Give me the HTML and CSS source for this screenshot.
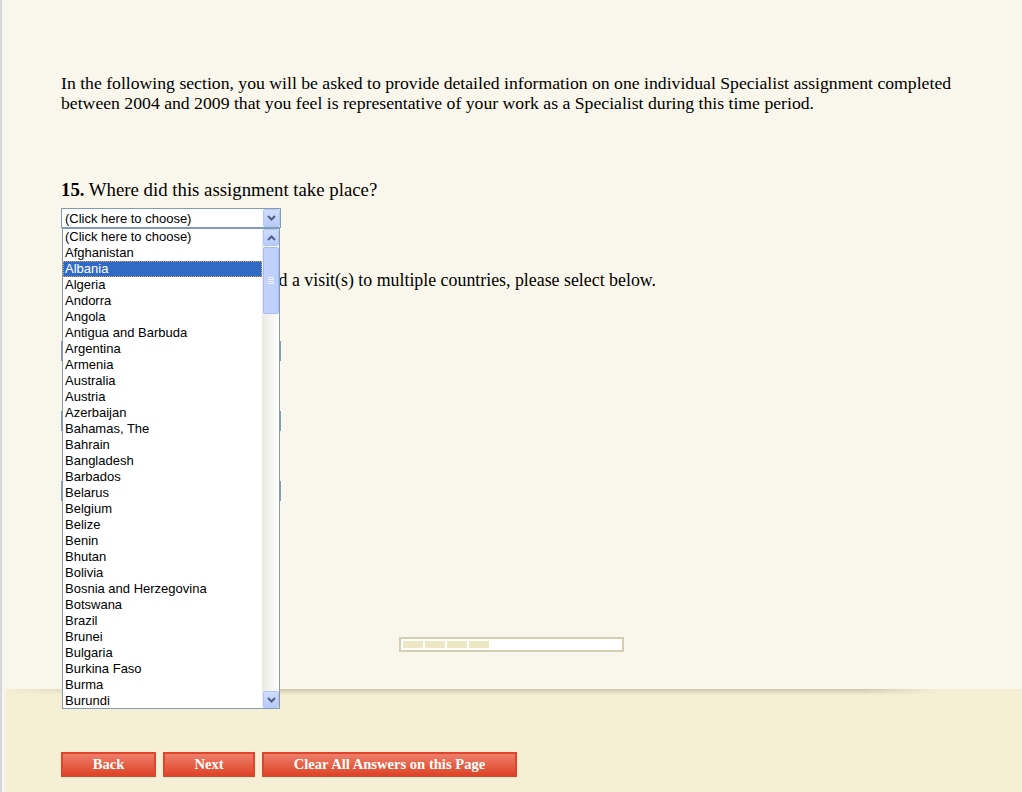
FILE: index.html
```html
<!DOCTYPE html>
<html lang="en">
<head>
    <meta charset="UTF-8">
    <title>Specialist Survey</title>
    <link rel="stylesheet" href="styles.css">
</head>
<body>
    <div class="page">
        <!-- Survey Section -->
        <div class="main">
            <p class="intro">In the following section, you will be asked to provide detailed information on one individual Specialist assignment completed between 2004 and 2009 that you feel is representative of your work as a Specialist during this time period.</p>

            <div class="question q15">
                <p class="q-title"><b>15.</b> Where did this assignment take place?</p>
                <div class="dropdown">
                    <div class="select">
                        <span class="select-text">(Click here to choose)</span>
                        <span class="arrow-btn">
                            <svg width="9" height="6" viewBox="0 0 9 6"><polyline points="1,1 4.5,4.5 8,1" fill="none" stroke="#4d6185" stroke-width="2"/></svg>
                        </span>
                    </div>

                    <!-- Open option list -->
                    <div class="listbox">
                        <ul class="options">
                            <li>(Click here to choose)</li>
                            <li>Afghanistan</li>
                            <li class="selected">Albania</li>
                            <li>Algeria</li>
                            <li>Andorra</li>
                            <li>Angola</li>
                            <li>Antigua and Barbuda</li>
                            <li>Argentina</li>
                            <li>Armenia</li>
                            <li>Australia</li>
                            <li>Austria</li>
                            <li>Azerbaijan</li>
                            <li>Bahamas, The</li>
                            <li>Bahrain</li>
                            <li>Bangladesh</li>
                            <li>Barbados</li>
                            <li>Belarus</li>
                            <li>Belgium</li>
                            <li>Belize</li>
                            <li>Benin</li>
                            <li>Bhutan</li>
                            <li>Bolivia</li>
                            <li>Bosnia and Herzegovina</li>
                            <li>Botswana</li>
                            <li>Brazil</li>
                            <li>Brunei</li>
                            <li>Bulgaria</li>
                            <li>Burkina Faso</li>
                            <li>Burma</li>
                            <li>Burundi</li>
                        </ul>
                        <div class="scrollbar">
                            <div class="sb-btn">
                                <svg width="9" height="6" viewBox="0 0 9 6"><polyline points="1,5 4.5,1.5 8,5" fill="none" stroke="#4d6185" stroke-width="2"/></svg>
                            </div>
                            <div class="sb-track">
                                <div class="sb-thumb">
                                    <span class="grip"></span>
                                </div>
                            </div>
                            <div class="sb-btn">
                                <svg width="9" height="6" viewBox="0 0 9 6"><polyline points="1,1 4.5,4.5 8,1" fill="none" stroke="#4d6185" stroke-width="2"/></svg>
                            </div>
                        </div>
                    </div>
                </div>
            </div>

            <div class="question q16">
                <p class="q-title"><b>16.</b> If your assignment included a visit(s) to multiple countries, please select below.</p>
                <div class="select"></div>
                <div class="select"></div>
                <div class="select"></div>
            </div>

            <!-- Progress -->
            <div class="progress">
                <span class="seg"></span>
                <span class="seg"></span>
                <span class="seg"></span>
                <span class="seg"></span>
            </div>
        </div>

        <!-- Navigation -->
        <div class="footer">
            <div class="shadow"></div>
            <div class="buttons">
                <button class="nav-btn back">Back</button>
                <button class="nav-btn next">Next</button>
                <button class="nav-btn clear">Clear All Answers on this Page</button>
            </div>
        </div>
    </div>
</body>
</html>
```

FILE: styles.css
```css
/* General Styles */
body {
    margin: 0;
    font-family: "Liberation Serif", "Times New Roman", serif;
    font-size: 16px;
    color: #000;
    background-color: #f4f4f2;
    border-left: 2px solid #d6d6d6;
    padding-left: 3px;
}

.page {
    min-height: 792px;
    background-color: #f9f7eb;
}

/* Survey area */
.main {
    box-sizing: border-box;
    height: 689px;
    padding: 73px 60px 0 56px;
    background-color: #f9f7eb;
}

.intro {
    margin: 0;
    font-size: 17.7px;
    line-height: 20px;
}

.question {
    margin-top: 67px;
}

.q-title {
    margin: 0;
    line-height: 20px;
}

.q15 .q-title {
    font-size: 18.8px;
}

/* Fake select boxes */
.dropdown {
    position: relative;
    margin-top: 8px;
    width: 220px;
}

.select {
    box-sizing: border-box;
    width: 220px;
    height: 20px;
    border: 1px solid #7f9db9;
    background-color: #fff;
    font-family: "Liberation Sans", Arial, sans-serif;
    font-size: 13px;
    display: flex;
    align-items: center;
    justify-content: space-between;
}

.select-text {
    padding-left: 3px;
    line-height: 16px;
    padding-top: 1px;
}

.arrow-btn {
    box-sizing: border-box;
    width: 17px;
    height: 18px;
    border: 1px solid #b3c7f3;
    border-radius: 2px;
    background: linear-gradient(to bottom, #cfdcfd, #b8cbf8);
    display: flex;
    align-items: center;
    justify-content: center;
}

/* Open list */
.listbox {
    position: absolute;
    top: 20px;
    left: 1px;
    z-index: 10;
    box-sizing: border-box;
    width: 218px;
    height: 481px;
    border: 1px solid #7f9db9;
    background-color: #fff;
    display: flex;
}

.options {
    list-style: none;
    margin: 0;
    padding: 0;
    flex: 1;
    font-family: "Liberation Sans", Arial, sans-serif;
    font-size: 13px;
}

.options li {
    box-sizing: border-box;
    height: 16px;
    line-height: 16px;
    padding-left: 2px;
    white-space: nowrap;
}

.options li.selected {
    background-color: #316ac5;
    color: #fff;
    outline: 1px dotted #d9a35a;
    outline-offset: -1px;
}

.scrollbar {
    width: 17px;
    display: flex;
    flex-direction: column;
    background: linear-gradient(to right, #ebeae2, #fefefb);
}

.sb-btn {
    box-sizing: border-box;
    height: 17px;
    margin: 0 0 0 1px;
    border: 1px solid #b3c7f3;
    border-radius: 2px;
    background: linear-gradient(to bottom, #cfdcfd, #b8cbf8);
    display: flex;
    align-items: center;
    justify-content: center;
}

.sb-track {
    flex: 1;
    padding: 1px 0 0 1px;
}

.sb-thumb {
    box-sizing: border-box;
    height: 67px;
    border: 1px solid #a6bcf0;
    border-radius: 2px;
    background: linear-gradient(to right, #c3d3fc, #bccffb);
    display: flex;
    align-items: center;
    justify-content: center;
}

.grip {
    width: 6px;
    height: 7px;
    background: repeating-linear-gradient(to bottom, #eef3fe 0 1px, transparent 1px 2px);
}

/* Question 16 */
.q16 {
    margin-top: 42px;
}

.q16 .q-title {
    font-size: 17.85px;
}

.q16 .select {
    margin-top: 50px;
}

.q16 .select:first-of-type {
    margin-top: 51px;
}

/* Progress bar */
.progress {
    box-sizing: border-box;
    width: 225px;
    height: 15px;
    margin: 136px auto 0;
    border: 2px solid #d4cfb0;
    background-color: #fff;
    padding: 2px 0 0 2px;
    display: flex;
    gap: 2px;
}

.seg {
    width: 20px;
    height: 7px;
    background-color: #ede7c3;
}

/* Footer */
.footer {
    position: relative;
    height: 103px;
    background-color: #f5efd6;
    box-sizing: border-box;
    padding-top: 63px;
}

.shadow {
    position: absolute;
    top: 0;
    left: 0;
    width: 935px;
    height: 6px;
    background: linear-gradient(to bottom, rgba(160, 150, 115, 0.45), rgba(160, 150, 115, 0));
    -webkit-mask-image: linear-gradient(to right, transparent 0, #000 120px, #000 860px, transparent 935px);
    mask-image: linear-gradient(to right, transparent 0, #000 120px, #000 860px, transparent 935px);
}

.buttons {
    display: flex;
    gap: 7px;
    padding-left: 56px;
}

.nav-btn {
    box-sizing: border-box;
    height: 25px;
    border: 2px solid #e1432b;
    background: linear-gradient(to bottom, #ed7e69, #dd4529);
    color: #fff;
    font-family: "Liberation Serif", "Times New Roman", serif;
    font-weight: bold;
    font-size: 14.6px;
    padding: 0;
    cursor: pointer;
}

.back {
    width: 95px;
}

.next {
    width: 92px;
}

.clear {
    width: 255px;
}
```
